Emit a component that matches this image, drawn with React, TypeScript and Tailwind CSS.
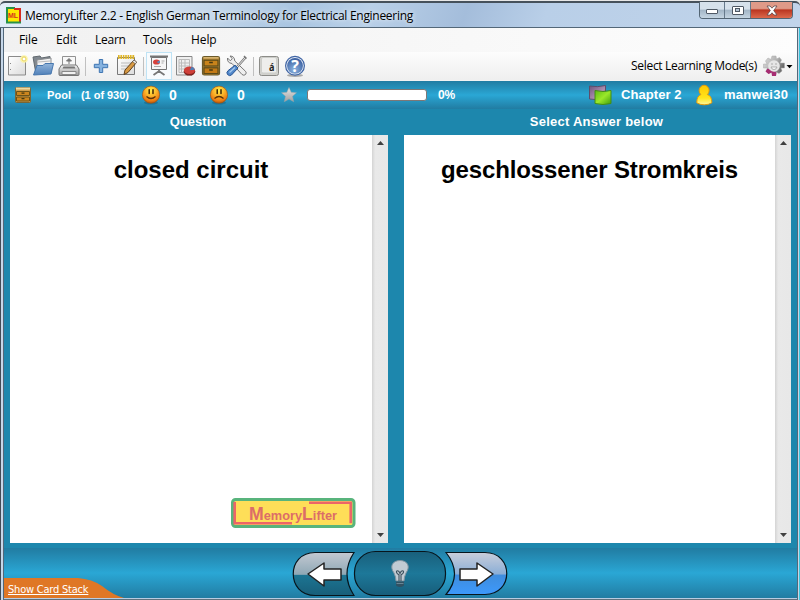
import React from "react";

type Kids = { children?: React.ReactNode };

function Slot({ children, active }: Kids & { active?: boolean }) {
  return (
    <div className={active ? "h-[28px] w-[26px] border border-[#bfe3f5] bg-[#f8fbfd]" : "h-[26px] w-[26px]"}>
      <svg width="26" height="26" viewBox="0 0 26 26" className={active ? "-ml-px block" : "block"}>{children}</svg>
    </div>
  );
}

function Sep() {
  return <div className="flex h-[19px] w-[6px] justify-center pl-px"><div className="h-full w-px bg-[#c0c0c0]" /></div>;
}

function Defs() {
  return (
    <svg width="0" height="0" className="absolute">
      <defs>
        <linearGradient id="paper" x1="0" y1="0" x2="1" y2="1"><stop offset="0" stopColor="#fff" /><stop offset="1" stopColor="#dcdcdc" /></linearGradient>
        <linearGradient id="folder" x1="0" y1="0" x2="0" y2="1"><stop offset="0" stopColor="#93b5da" /><stop offset="1" stopColor="#4f80b9" /></linearGradient>
        <linearGradient id="grey" x1="0" y1="0" x2="0" y2="1"><stop offset="0" stopColor="#f6f6f6" /><stop offset="1" stopColor="#999" /></linearGradient>
        <radialGradient id="help" cx=".45" cy=".75" r=".8"><stop offset="0" stopColor="#8db4e0" /><stop offset="1" stopColor="#31569a" /></radialGradient>
        <radialGradient id="smile" cx=".5" cy=".25" r=".75"><stop offset="0" stopColor="#ffec48" /><stop offset=".4" stopColor="#fcb92c" /><stop offset=".8" stopColor="#ec7d12" /><stop offset="1" stopColor="#b4560c" /></radialGradient>
        <linearGradient id="star" x1="0" y1="0" x2="0" y2="1"><stop offset="0" stopColor="#e6e6e6" /><stop offset="1" stopColor="#a0a0a0" /></linearGradient>
        <linearGradient id="purple" x1="0" y1="0" x2="1" y2="1"><stop offset="0" stopColor="#6d5379" /><stop offset=".6" stopColor="#ad8fb2" /><stop offset="1" stopColor="#604667" /></linearGradient>
        <linearGradient id="green" x1="0" y1="0" x2="1" y2="1"><stop offset="0" stopColor="#5bbd12" /><stop offset=".5" stopColor="#9be82a" /><stop offset="1" stopColor="#3f9e0b" /></linearGradient>
        <linearGradient id="user" x1="0" y1="0" x2="0" y2="1"><stop offset="0" stopColor="#ffc800" /><stop offset=".65" stopColor="#ffe51c" /><stop offset="1" stopColor="#fff6a0" /></linearGradient>
        <linearGradient id="leftbtn" x1="0" y1="0" x2="0" y2="1"><stop offset="0" stopColor="#c3c9d2" /><stop offset=".51" stopColor="#8fa8b5" /><stop offset=".52" stopColor="#1c7593" /><stop offset="1" stopColor="#185e79" /></linearGradient>
        <linearGradient id="midbtn" x1="0" y1="0" x2="0" y2="1"><stop offset="0" stopColor="#195f7b" /><stop offset=".5" stopColor="#1d7899" /><stop offset="1" stopColor="#175d7a" /></linearGradient>
        <linearGradient id="rightbtn" x1="0" y1="0" x2="0" y2="1"><stop offset="0" stopColor="#c9cedb" /><stop offset=".51" stopColor="#8baed6" /><stop offset=".54" stopColor="#3f8ddd" /><stop offset="1" stopColor="#3d99fc" /></linearGradient>
        <linearGradient id="gear" x1="0" y1="0" x2="1" y2=".5"><stop offset="0" stopColor="#dcdcdc" /><stop offset=".6" stopColor="#b0b0b0" /><stop offset="1" stopColor="#666" /></linearGradient>
      </defs>
    </svg>
  );
}

function Cabinet() {
  return (
    <g>
      <rect x="4.5" y="3.5" width="17" height="18.5" rx="1.8" fill="#b98a3a" stroke="#6b5a2a" strokeWidth="1.2" />
      <path d="M5.500 4.800h15" stroke="#d9b877" strokeWidth="1.4" />
      <rect x="6" y="7.200" width="14" height="5.800" fill="#c9831b" stroke="#5b4a18" strokeWidth="1.2" />
      <rect x="6" y="14.800" width="14" height="5.800" fill="#c47a16" stroke="#5b4a18" strokeWidth="1.2" />
      <path d="M11.200 9.500h3.600M11.200 17h3.600" stroke="#463812" strokeWidth="1.4" />
    </g>
  );
}

function PaleCabinet() {
  return (
    <svg width="18" height="18" viewBox="0 0 18 18" className="ml-[10px] block">
      <rect x="1.500" y="1.500" width="15" height="15" rx="1" fill="#d0a050" stroke="#7a6534" />
      <path d="M2 2.500h14" stroke="#ecd9a2" strokeWidth="2" />
      <path d="M2.500 5.500h13v4h-13zM2.500 11h13v4h-13z" fill="#cc861e" stroke="#6b5319" />
      <path d="M7.500 7.200h3M7.500 12.700h3" stroke="#46380f" strokeWidth="1.200" />
    </svg>
  );
}

function Toolbar() {
  return (
    <div className="flex h-[28px] items-center bg-linear-to-b from-[#fdfdfd] to-[#efefef]">
      <Slot>
        <path d="M4.500 3.500h17v18.500h-17z" fill="url(#paper)" stroke="#8b8b8b" />
        <path d="M6.500 10v1M6.500 16v1" stroke="#888" />
        <circle cx="20" cy="6" r="3.800" fill="#fdf4a2" opacity=".9" /><circle cx="20" cy="6" r="2" fill="#fff" stroke="#e9d45a" />
      </Slot>
      <Slot>
        <path d="M3 4l7-1 1.500 2L20 3.500V18L6 21z" fill="#818890" stroke="#62696f" />
        <path d="M7 7l14-2v13H7z" fill="#f2f2f2" stroke="#8b8e91" />
        <path d="M8 9l12-1" stroke="#bbb" />
        <path d="M3.500 22L7 12.500l6 0 2-2h8.500L21 21z" fill="url(#folder)" stroke="#4777ae" />
      </Slot>
      <Slot>
        <path d="M6.500 13V3.500h13V13" fill="#f8f8f8" stroke="#929292" />
        <path d="M13 11V7m-2.500 1L13 5.500l2.500 2.500z" fill="#777" stroke="#777" />
        <path d="M5.500 12h15l2.500 4v5.500q0 1-1 1H4q-1 0-1-1V16z" fill="url(#grey)" stroke="#757575" />
        <path d="M7.500 13.500h11l1 2h-13z" fill="#777" /><path d="M6 18.500h14v3H6z" fill="#f1f1f1" stroke="#888" />
      </Slot>
      <Sep />
      <Slot><path d="M11.300 6.500h3.400v4.800h5v3.400h-5v4.800h-3.400v-4.800h-5v-3.400h5z" fill="#85b2df" stroke="#3f75b2" /></Slot>
      <Slot>
        <path d="M3.500 4.500h17v17h-17z" fill="url(#paper)" stroke="#797979" />
        <path d="M4 4h17" stroke="#e0b526" strokeWidth="4" strokeDasharray="1.600 .8" /><path d="M7 10h10M7 13h8M7 16h6" stroke="#bbb" />
        <path d="M20 7l2.700 2.200L14 19.500l-4 2 1-4.500z" fill="#d89a43" stroke="#603f1a" /><path d="M20 7l2.700 2.200-1.400 1.600-2.700-2.200z" fill="#eee" stroke="#555" strokeWidth=".6" />
      </Slot>
      <Sep />
      <Slot active>
        <path d="M13 17v3M12.500 18.500l-5 3.500M13.500 18.500l5 3.500" stroke="#777" strokeWidth="1.800" />
        <path d="M5.500 4.500h15v12h-15z" fill="#f6f6f6" stroke="#747474" /><path d="M4 3.500h18" stroke="#757575" strokeWidth="2" />
        <ellipse cx="10.500" cy="9" rx="3.500" ry="2.600" fill="#d8403a" /><path d="M10.500 9l3.300-1.500q.8 1.500-.8 3z" fill="#568bc2" /><path d="M15.500 8h3M15.500 10h2M8 13.500h7" stroke="#aaa" />
      </Slot>
      <Slot>
        <path d="M4.500 3.500h15.500v18.500H4.500z" fill="#f0f0f0" stroke="#888" />
        <path d="M7 6.500h10.500v13H7zM9.500 6.500v13M13 6.500v13M7 10h10M7 13h10M7 16h10" fill="none" stroke="#bbb" />
        <ellipse cx="17.500" cy="18.600" rx="5.800" ry="4" fill="#80231e" /><ellipse cx="17.500" cy="17.200" rx="5.500" ry="3.800" fill="#d04039" /><path d="M17.500 17.200l2-3.400q3 .7 3.500 3z" fill="#4f7fb6" />
      </Slot>
      <Slot><Cabinet /></Slot>
      <Slot>
        <path d="M3.500 5q-.5 5 4.500 5.500L18 21.500q2 1.500 3.500 0 1.500-1.700 0-3.200L10.800 8Q10.500 3 6 3l2.300 2.800-2 2z" fill="#eee" stroke="#777" />
        <path d="M21.500 4.500L13 14" fill="none" stroke="#777" strokeWidth="2.400" /><path d="M21.500 4.500L13 14" stroke="#eaeaea" /><path d="M20 3l2.500 2.500" stroke="#777" strokeWidth="1.500" />
        <path d="M11 12.200l3 2.800-6.500 7q-2 1.500-4-.5-1.500-2 .5-3.800z" fill="#5288cb" stroke="#285694" /><path d="M5.500 19.500l5.500-5" stroke="#a6caee" strokeWidth="1.300" />
      </Slot>
      <Sep />
      <Slot>
        <rect x="3.500" y="3.500" width="19" height="19" rx="2" fill="#d1d1cd" stroke="#8c8c88" /><rect x="5.500" y="4.500" width="15" height="15.500" rx="1.500" fill="#eeeeec" stroke="#cdceca" />
        <text x="13" y="17.500" fontSize="11" fontWeight="700" fontFamily="Open Sans, sans-serif" fill="#222" textLength="5.500" lengthAdjust="spacingAndGlyphs">á</text>
      </Slot>
      <Slot>
        <ellipse cx="13" cy="22.400" rx="8" ry="1.500" fill="#aaa" /><circle cx="13" cy="12.800" r="9.400" fill="#e8eff8" stroke="#3f64a4" strokeWidth="1.200" /><circle cx="13" cy="12.800" r="7.900" fill="url(#help)" />
        <text x="13" y="18.600" textAnchor="middle" fontSize="16" fontWeight="700" fontFamily="Open Sans, sans-serif" fill="#fff">?</text>
      </Slot>
      <span className="ml-auto text-[12px] tracking-[-0.31px] whitespace-nowrap text-black">Select Learning Mode(s)</span>
      <svg width="24" height="26" viewBox="0 0 24 26" className="ml-[5px] block">
        <path d="M10 3h4l.5 3 3-1.500 2 2.500-1.500 3h4.500v5H19l1 3-3 2.500-3-1.500-.5 3h-3L10 19l-3 1.500-3-2.500 1.500-3H1.500v-4H5L3.500 8 6 5l3 1.500z" fill="url(#gear)" stroke="#aaa" strokeWidth=".5" />
        <path d="M5.500 15.500L3.500 18.500l3 2.500 3-1.500.5 3.500h4l.500-3.500-2-1z" fill="#a62d72" />
        <circle cx="12" cy="13" r="5.800" fill="#e6e6e6" /><path d="M10 10v2M14 10v2M9 14h6q-.5 2.500-3 2.500t-3-2.500z" stroke="#a6a6a6" fill="#fff" strokeWidth=".9" />
      </svg>
      <svg width="7" height="5" viewBox="0 0 7 5" className="mr-[4px] block"><path d="M.5 1h6L3.500 4.300z" fill="#000" /></svg>
    </div>
  );
}

function Face({ sad }: { sad?: boolean }) {
  return (
    <svg width="20" height="20" viewBox="0 0 20 20" className="-ml-px block">
      <ellipse cx="10" cy="17.800" rx="7" ry="1.800" fill="#155f7b" opacity=".5" />
      <circle cx="10" cy="9.700" r="8.600" fill="url(#smile)" stroke="#9c4d0d" strokeWidth=".6" />
      <path d="M8.200 4.800v3.800M12 4.800v3.800" stroke="#3b2507" strokeWidth="1.500" strokeLinecap="round" />
      <path d={sad ? "M5.500 13.500Q10 9.500 14.500 13.500" : "M5.500 11.500Q10 15.500 14.500 11.500"} stroke="#5b3107" strokeWidth="1.200" fill="none" />
    </svg>
  );
}

function StatusBar() {
  return (
    <div className="flex h-[28px] items-center bg-linear-to-b from-[#217ca2] via-[#2aa7d5] to-[#217ca2] font-['Liberation_Sans',sans-serif] text-[13px] font-bold text-white">
      <PaleCabinet />
      <span className="ml-[15px] w-[34px] text-[11px] tracking-[0.1px]">Pool</span>
      <span className="w-[61px] whitespace-nowrap text-[11px] tracking-[-0.04px]">(1 of 930)</span>
      <Face />
      <span className="ml-[8px] w-[41px] text-[14px] tracking-[-0.5px]">0</span>
      <Face sad />
      <span className="ml-[8px] w-[44px] text-[14px] tracking-[-0.5px]">0</span>
      <svg width="16" height="16" viewBox="0 0 16 16" className="block"><path d="M8 .5l2.200 4.800 5.300.5-4 3.500 1.200 5.400L8 12l-4.700 2.700 1.200-5.400L.5 5.800l5.300-.5z" fill="url(#star)" stroke="#9ba3a6" strokeWidth=".5" /></svg>
      <div className="ml-[10px] h-[12px] w-[120px] rounded-[3px] border border-[#7d7776] bg-white" />
      <span className="ml-[11px] w-[150px] text-[12px] tracking-[-0.1px]">0%</span>
      <svg width="24" height="22" viewBox="0 0 24 22" className="block">
        <path d="M1.500 2q8 1.500 16-.5v13q-8 2-16 .5z" fill="url(#purple)" stroke="#5e4d6a" />
        <path d="M7 6.500q8 2 16 0v13q-8 2-16 0z" fill="url(#green)" stroke="#438c16" />
      </svg>
      <span className="ml-[9px] w-[75px] whitespace-nowrap tracking-[0.08px]">Chapter 2</span>
      <svg width="17" height="22" viewBox="0 0 18 22" preserveAspectRatio="none" className="block"><path d="M5.200 10.600a5.300 5.300 0 1 1 6.800 0q4.700 1 4.800 8.200-3.500 2-8.100 2t-7.900-2q.1-6.800 4.400-8.200z" fill="url(#user)" stroke="#e99a05" /></svg>
      <span className="ml-[11px] whitespace-nowrap tracking-[0.25px]">manwei30</span>
    </div>
  );
}

function ScrollBar() {
  return (
    <div className="flex w-[16px] flex-col items-center justify-between bg-linear-to-r from-[#d4d4d4] via-[#e9e9e9] via-20% to-[#e8e8e8] py-[6px]">
      <svg width="7" height="4" viewBox="0 0 7 4" className="block"><path d="M0 4L3.500 0 7 4z" fill="#404040" /></svg>
      <svg width="7" height="4" viewBox="0 0 7 4" className="block"><path d="M0 0h7L3.500 4z" fill="#404040" /></svg>
    </div>
  );
}

function Badge() {
  return (
    <svg width="125" height="30" viewBox="0 0 125 30" className="mr-[16px] mb-[15px] block">
      <rect x="1.500" y="1.500" width="121.500" height="27" rx="3" fill="#fede58" stroke="#58b47c" strokeWidth="3" />
      <path d="M3.700 4v21.300H61M78 4.700h41.700v20.500" fill="none" stroke="#ec6568" strokeWidth="2.600" />
      <text x="18" y="21.500" textLength="88" lengthAdjust="spacingAndGlyphs" fontFamily="Liberation Sans, sans-serif" fontWeight="700" fontSize="13" fill="#dc6d68"><tspan fontSize="18">M</tspan>emory<tspan fontSize="18">L</tspan>ifter</text>
    </svg>
  );
}

function Panel({ title, badge, wide }: { title: string; badge?: boolean; wide?: boolean }) {
  return (
    <div className={wide ? "flex h-[408px] w-[387px] bg-white" : "flex h-[408px] w-[378px] bg-white"}>
      <div className="flex flex-1 flex-col items-end justify-between">
        <h1 className={wide ? "mt-[21px] w-full text-center font-['Liberation_Sans',sans-serif] text-[24px] leading-[28px] font-bold tracking-[-0.13px] text-black" : "mt-[21px] w-full text-center font-['Liberation_Sans',sans-serif] text-[24px] leading-[28px] font-bold text-black"}>{title}</h1>
        {badge && <Badge />}
      </div>
      <ScrollBar />
    </div>
  );
}

function BottomBar() {
  return (
    <div className="relative flex h-[50px] justify-center bg-linear-to-b from-[#217ca2] via-[#2aa7d5] to-[#217ca2]">
      <svg width="216" height="48" viewBox="0 0 216 48" className="mt-[2px] mr-[2px] block">
        <path d="M23 2.500h39Q48 24 62 45.500H23C-6 45.500-6 2.500 23 2.500z" fill="url(#leftbtn)" stroke="#07151c" strokeWidth="1.200" />
        <rect x="62.500" y="1.500" width="91" height="44" rx="21" fill="url(#midbtn)" stroke="#07151c" strokeWidth="1.200" />
        <path d="M193 2.500h-39Q171 24 154 44.500h39C222 44.500 222 2.500 193 2.500z" fill="url(#rightbtn)" stroke="#07151c" strokeWidth="1.200" />
        <path d="M16 24l16-11v6h17v11H32v6z" fill="#fff" stroke="#222" strokeWidth="1.500" strokeLinejoin="round" />
        <path d="M201 24l-16-11v6h-17v11h17v6z" fill="#fff" stroke="#222" strokeWidth="1.500" strokeLinejoin="round" />
        <path d="M104 31q0-4-2-8c-5-7-1-12.500 6-12.500s11 5.500 6 12.500q-2 4-2 8z" fill="#c1cbd3" stroke="#8195a1" />
        <path d="M107 31v-6q-3-2-2.500-3.500t2.500 0l1 2 1-2q2-1.500 2.500 0T109 25v6" fill="none" stroke="#3d515d" strokeWidth="1.100" />
        <path d="M104 31.500h8v4q-4 3-8 0z" fill="#315263" /><path d="M104.500 33.500h7" stroke="#688595" />
      </svg>
      <div className="absolute bottom-0 left-0 h-[20px] w-[121px]">
        <svg width="121" height="20" viewBox="0 0 121 20" className="absolute inset-0 block"><path d="M0 0h74Q88 1 98 8q11 9 22 12H0z" fill="#df7725" /></svg>
        <a className="relative ml-1 block pt-[5px] font-['DejaVu_Sans_Condensed','DejaVu_Sans',sans-serif] text-[11px] leading-[14px] tracking-[-0.21px] whitespace-nowrap text-white underline">Show Card Stack</a>
      </div>
    </div>
  );
}

function TitleBar() {
  return (
    <div className="h-[28px] bg-[#e7e7e7] pt-px">
      <div className="flex h-[27px] items-start rounded-t-[5px] border-t-2 border-b border-t-[#46515b] border-b-[#536778] bg-[linear-gradient(110deg,#e3edf8_0%,#cddded_22%,#a9c5e1_37%,#b9d0e8_46%,#a4bddb_58%,#b9cfe8_68%,#c1d4ea_100%)]">
        <svg width="17" height="17" viewBox="0 0 17 17" className="mt-[4px] ml-[5px] block"><path d="M1 1h15v15H1z" fill="#ffe600" /><path d="M2 16V1h8" stroke="#249148" strokeWidth="2" fill="none" /><path d="M9 2h6v14" stroke="#d52c20" strokeWidth="2" fill="none" /><path d="M1 15.500h15" stroke="#299148" strokeWidth="2" /><text x="3" y="10.500" fontSize="7" fontWeight="700" fontFamily="Liberation Sans, sans-serif" fill="#d7301e">ML</text></svg>
        <span className="mt-[4px] ml-[3px] text-[12px] leading-[17px] tracking-[-0.29px] whitespace-nowrap text-black [text-shadow:0_0_5px_white]">MemoryLifter 2.2 - English German Terminology for Electrical Engineering</span>
        <div className="-mt-px mr-[7px] ml-auto flex h-[17px] w-[94px] overflow-hidden rounded-b-[4px] border border-t-0 border-[#536574]">
          <div className="flex w-[25px] items-center justify-center border-r border-[#66798b] bg-linear-to-b from-[#d6e1eb] from-45% via-[#a2b5c6] via-50% to-[#c5d5e2]"><div className="mt-[3px] h-[5px] w-[12px] rounded-[1px] border border-[#4f5965] bg-white" /></div>
          <div className="flex w-[26px] items-center justify-center border-r border-[#66798b] bg-linear-to-b from-[#d6e1eb] from-45% via-[#a2b5c6] via-50% to-[#c5d5e2]"><div className="flex h-[9px] w-[12px] items-center justify-center rounded-[1px] border border-[#4f5965] bg-white"><div className="h-[4px] w-[5px] border border-[#4f5965] bg-[#b6c6d5]" /></div></div>
          <div className="flex flex-1 items-center justify-center bg-linear-to-b from-[#df9a88] from-40% via-[#ba3520] via-50% to-[#dd684b]"><svg width="12" height="11" viewBox="0 0 12 11"><path d="M1 1h3l2 2.200L8 1h3L7.700 5.500 11 10H8L6 7.800 4 10H1l3.300-4.500z" fill="#fff" stroke="#5b4649" strokeWidth=".8" /></svg></div>
        </div>
      </div>
    </div>
  );
}

export default function App() {
  return (
    <div className="flex h-[600px] w-[800px] flex-col overflow-hidden bg-[#b8cce1] font-['Open_Sans','Noto_Sans',sans-serif]">
      <Defs />
      <TitleBar />
      <div className="flex h-[572px]">
        <div className="flex w-[4px]"><div className="w-px bg-[#414b55]" /><div className="w-[2px] bg-[#c6d7e9]" /><div className="w-px bg-[#52677a]" /></div>
        <main className="w-[793px] border-b border-[#60717d]">
          <nav className="flex h-[24px] items-center bg-linear-to-r from-[#f1f1f1] to-[#fdfdfd] text-[12px] text-black">
            <span className="ml-[15px] w-[37px] tracking-[-0.1px]">File</span>
            <span className="w-[39px] tracking-[-0.1px]">Edit</span>
            <span className="w-[48px] tracking-[-0.25px]">Learn</span>
            <span className="w-[48px] tracking-[-0.1px]">Tools</span>
            <span className="tracking-[-0.1px]">Help</span>
          </nav>
          <Toolbar />
          <div className="h-px bg-[#f2f2f2]" />
          <StatusBar />
          <div className="flex h-[26px] bg-[#1d87ad] font-['Liberation_Sans',sans-serif] text-[13px] leading-[26px] font-bold text-white">
            <div className="w-[388px] text-center tracking-[0.02px]">Question</div>
            <div className="w-[405px] pl-[4px] text-center tracking-[0.24px]">Select Answer below</div>
          </div>
          <div className="flex h-[413px] gap-[16px] bg-[#1d87ad] pl-[6px]">
            <Panel title="closed circuit" badge />
            <Panel title="geschlossener Stromkreis" wide />
          </div>
          <BottomBar />
        </main>
        <div className="flex w-[3px]"><div className="w-px bg-[#53687a]" /><div className="w-px bg-[#c7d7e7]" /><div className="w-px bg-[#39c6de]" /></div>
      </div>
    </div>
  );
}
